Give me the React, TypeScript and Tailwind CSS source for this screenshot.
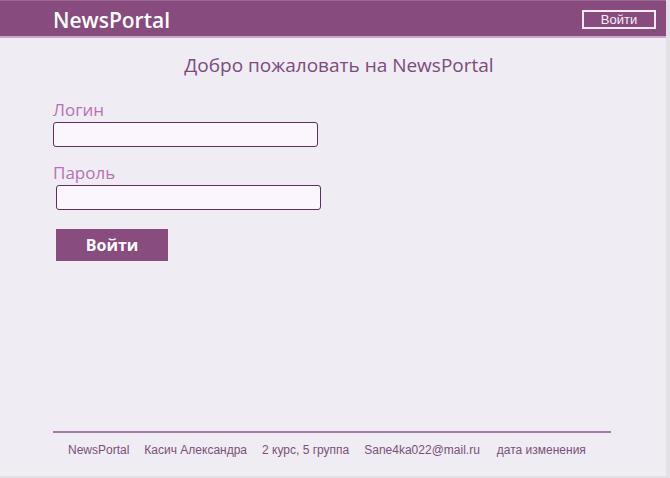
import React from 'react'

const brand = { fontFamily: '"Open Sans", "Noto Sans", sans-serif' }
const arial = { fontFamily: '"Liberation Sans", Arial, sans-serif' }

export default function App() {
  return (
    <div className="w-[670px] h-[478px] bg-[#e3e1e6] overflow-hidden">
      <div className="w-[666px] h-[476px] bg-[#efecf3] flex flex-col">
        {/* Header */}
        <header className="h-[38px] bg-[#874b7d] border-t border-[#9b6a93] border-b-2 border-b-[#c7a9cc] flex items-center justify-between pl-[53px] pr-[10px] shrink-0">
          <span className="text-white text-[21px] font-semibold leading-none mt-[3px]" style={brand}>NewsPortal</span>
          <button className="w-[74px] h-[19px] border-2 border-[#f3ecf5] text-[#f6eef8] text-[13px] leading-none flex items-center justify-center mt-[2px]" style={arial}>
            Войти
          </button>
        </header>

        {/* Main */}
        <main className="flex-1 flex flex-col">
          <h1 className="text-center text-[19px] text-[#7b4b7c] mt-[15px] ml-[12px] leading-[24px]" style={brand}>
            Добро пожаловать на NewsPortal
          </h1>

          <form className="flex flex-col pl-[53px] mt-[22px]">
            <label className="text-[17px] text-[#b872b2] leading-[22px]" style={brand}>Логин</label>
            <input className="w-[265px] h-[25px] mt-[1px] bg-[#fbf6fd] border border-[#5e2f5e] rounded-[3px]" />

            <label className="text-[17px] text-[#b872b2] leading-[22px] mt-[15px]" style={brand}>Пароль</label>
            <input className="w-[265px] h-[25px] mt-[1px] ml-[3px] bg-[#fbf6fd] border border-[#5e2f5e] rounded-[3px]" />

            <button type="button" className="w-[112px] h-[32px] mt-[19px] ml-[3px] bg-[#884c7e] text-white text-[16px] font-bold flex items-center justify-center" style={brand}>
              Войти
            </button>
          </form>
        </main>

        {/* Footer */}
        <footer className="mx-[53px] w-[558px] border-t-2 border-[#a47ba2] h-[45px] flex items-start gap-[15px] pl-[15px] pt-[8px] text-[12px] text-[#7a4f79]" style={arial}>
          <span>NewsPortal</span>
          <span>Касич Александра</span>
          <span>2 курс, 5 группа</span>
          <span>Sane4ka022@mail.ru</span>
          <span className="ml-[2px]">дата изменения</span>
        </footer>
      </div>
    </div>
  )
}
